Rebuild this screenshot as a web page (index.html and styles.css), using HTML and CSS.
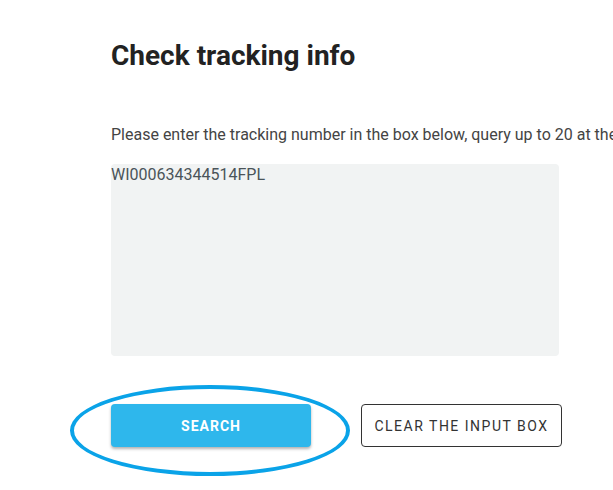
FILE: index.html
```html
<!DOCTYPE html>
<html lang="en">
<head>
  <meta charset="UTF-8">
  <meta name="viewport" content="width=device-width, initial-scale=1.0">
  <title>Check tracking info</title>
  <link rel="stylesheet" href="styles.css">
</head>
<body>
  <div class="track-page">
    <h1 class="track-title">Check tracking info</h1>
    <p class="track-hint">Please enter the tracking number in the box below, query up to 20 at the same time, separated by commas or line breaks.</p>
    <textarea class="track-input">WI000634344514FPL</textarea>
    <div class="button-group">
      <button class="btn btn-search">Search</button>
      <button class="btn btn-clear">Clear the input box</button>
      <!-- annotation drawn over the search button -->
      <div class="highlight-ring"></div>
    </div>
  </div>
</body>
</html>
```

FILE: styles.css
```css
body {
  margin: 0;
  font-family: Roboto, "Noto Sans", sans-serif;
  background: #fff;
  color: #333;
}

.track-page {
  box-sizing: border-box;
  height: 490px;
  padding: 36px 0 0 111px;
  white-space: nowrap;
  overflow: hidden;
}

.track-title {
  margin: 0;
  font-size: 28px;
  line-height: 40px;
  font-weight: 700;
  color: #222;
}

.track-hint {
  margin: 49px 0 0;
  font-size: 16px;
  line-height: 20px;
  color: #444;
}

.track-input {
  display: block;
  box-sizing: border-box;
  width: 448px;
  height: 192px;
  margin-top: 19px;
  padding: 1px 0 0;
  border: none;
  border-radius: 4px;
  background: #f1f3f3;
  font-family: inherit;
  font-size: 16px;
  line-height: 20px;
  color: #4a5459;
  resize: none;
  outline: none;
}

.button-group {
  position: relative;
  display: flex;
  gap: 50px;
  margin-top: 48px;
}

.btn {
  box-sizing: border-box;
  height: 43px;
  border-radius: 4px;
  font-family: inherit;
  font-size: 14px;
  text-transform: uppercase;
  cursor: pointer;
}

.btn-search {
  width: 200px;
  border: none;
  background: #2eb7ec;
  color: #fff;
  font-weight: 700;
  letter-spacing: 1px;
  box-shadow: 0 2px 3px rgba(0, 0, 0, 0.3);
}

.btn-clear {
  width: 201px;
  border: 1px solid #333;
  background: #fff;
  color: #333;
  font-weight: 400;
  letter-spacing: 1.5px;
}

.highlight-ring {
  position: absolute;
  left: -41px;
  top: -19px;
  width: 272px;
  height: 83px;
  border: 4px solid #0aa3e8;
  border-radius: 50%;
  pointer-events: none;
}
```
